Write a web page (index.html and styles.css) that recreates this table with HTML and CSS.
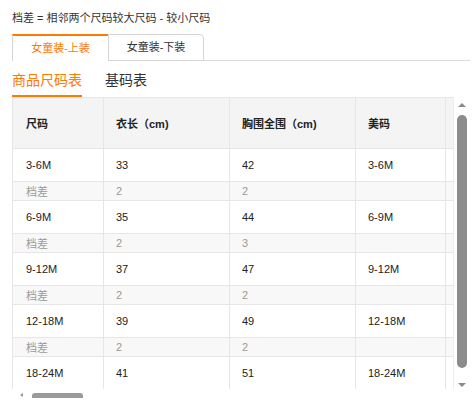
FILE: index.html
```html
<!DOCTYPE html>
<html lang="zh-CN">
<head>
<meta charset="utf-8">
<title>尺码表</title>
<link rel="stylesheet" href="styles.css">
</head>
<body>
  <div class="note">档差 = 相邻两个尺码较大尺码 - 较小尺码</div>
  <div class="tabs">
    <div class="tab active">女童装-上装</div>
    <div class="tab">女童装-下装</div>
  </div>
  <div class="subtabs">
    <div class="subtab active">商品尺码表</div>
    <div class="subtab">基码表</div>
  </div>
  <div class="table-wrap">
    <div class="viewport">
      <table class="size-table">
        <colgroup>
          <col class="c1"><col class="c2"><col class="c3"><col class="c4"><col class="c5"><col class="c6">
        </colgroup>
        <thead>
          <tr><th>尺码</th><th>衣长（cm)</th><th>胸围全围（cm)</th><th>美码</th><th></th><th></th></tr>
        </thead>
        <tbody>
          <tr class="data"><td>3-6M</td><td>33</td><td>42</td><td>3-6M</td><td></td><td></td></tr>
          <tr class="diff"><td>档差</td><td>2</td><td>2</td><td></td><td></td><td></td></tr>
          <tr class="data"><td>6-9M</td><td>35</td><td>44</td><td>6-9M</td><td></td><td></td></tr>
          <tr class="diff"><td>档差</td><td>2</td><td>3</td><td></td><td></td><td></td></tr>
          <tr class="data"><td>9-12M</td><td>37</td><td>47</td><td>9-12M</td><td></td><td></td></tr>
          <tr class="diff"><td>档差</td><td>2</td><td>2</td><td></td><td></td><td></td></tr>
          <tr class="data"><td>12-18M</td><td>39</td><td>49</td><td>12-18M</td><td></td><td></td></tr>
          <tr class="diff"><td>档差</td><td>2</td><td>2</td><td></td><td></td><td></td></tr>
          <tr class="data"><td>18-24M</td><td>41</td><td>51</td><td>18-24M</td><td></td><td></td></tr>
        </tbody>
      </table>
    </div>
    <div class="vscroll">
      <span class="arrow up"></span>
      <span class="vthumb"></span>
      <span class="arrow down"></span>
    </div>
    <div class="hscroll">
      <span class="harrow"></span>
      <span class="hthumb"></span>
    </div>
  </div>
</body>
</html>
```

FILE: styles.css
```css
html, body {
  margin: 0;
  background: #fff;
}
body {
  padding: 11px 4px 0 12px;
  font-family: "Liberation Sans", "Noto Sans CJK SC", sans-serif;
  font-size: 11px;
  color: #333;
}
.note {
  height: 14px;
  line-height: 14px;
  font-size: 11px;
  color: #333;
  margin-bottom: 9px;
}
.tabs {
  display: flex;
  border-bottom: 1px solid #dcdcdc;
  height: 26px;
}
.tab {
  box-sizing: border-box;
  width: 96px;
  height: 27px;
  border: 1px solid #d6d6d6;
  border-top-right-radius: 4px;
  text-align: center;
  line-height: 25px;
  color: #333;
  background: #fff;
}
.tab.active {
  border-top: 2px solid #ff7a00;
  border-right: none;
  border-bottom: none;
  border-radius: 0;
  color: #ff7a00;
  line-height: 24px;
}
.subtabs {
  display: flex;
  gap: 23px;
  height: 36px;
}
.subtab {
  box-sizing: border-box;
  height: 36px;
  padding-top: 4px;
  line-height: 30px;
  font-size: 14px;
  color: #333;
}
.subtab.active {
  color: #ff7a00;
  border-bottom: 2px solid #ff7a00;
}
.table-wrap {
  position: relative;
  width: 458px;
  height: 301px;
  overflow: hidden;
  background: #fff;
}
.viewport {
  width: 442px;
  height: 292px;
  overflow: hidden;
  background: #f4f4f4;
}
.size-table {
  border-collapse: collapse;
  table-layout: fixed;
  width: 660px;
  font-size: 11px;
}
.c1 { width: 91px; }
.c2 { width: 126px; }
.c3 { width: 126px; }
.c4 { width: 90px; }
.c5 { width: 110px; }
.c6 { width: 117px; }
.size-table th,
.size-table td {
  border: 1px solid #e6e6e6;
  padding: 0 0 0 12px;
  text-align: left;
  white-space: nowrap;
  overflow: hidden;
}
.size-table th {
  height: 50px;
  background: #f4f4f4;
  font-weight: bold;
  color: #222;
}
.size-table th:first-child,
.size-table td:first-child {
  padding-left: 13px;
}
.size-table tr.data td {
  height: 32px;
  background: #fff;
  color: #222;
}
.size-table tr.diff td {
  height: 18px;
  background: #f8f8f8;
  color: #9a9a9a;
}
.vscroll {
  position: absolute;
  top: 0;
  right: 0;
  width: 16px;
  bottom: 0;
  background: #fff;
  border-left: 1px solid #ededed;
}
.arrow {
  position: absolute;
  left: 4px;
  width: 0;
  height: 0;
  border-left: 4px solid transparent;
  border-right: 4px solid transparent;
}
.arrow.up {
  top: 6px;
  border-bottom: 4px solid #8a8a8a;
}
.arrow.down {
  top: 286px;
  border-top: 4px solid #8a8a8a;
}
.vthumb {
  position: absolute;
  top: 18px;
  left: 3px;
  width: 10px;
  height: 253px;
  border-radius: 5px;
  background: #8c8c8c;
}
.hscroll {
  position: absolute;
  left: 0;
  bottom: 0;
  width: 442px;
  height: 9px;
  background: #fff;
}
.harrow {
  position: absolute;
  left: 8px;
  top: 4px;
  width: 0;
  height: 0;
  border-top: 2px solid transparent;
  border-bottom: 2px solid transparent;
  border-right: 3px solid #999;
}
.hthumb {
  position: absolute;
  left: 20px;
  top: 4px;
  width: 51px;
  height: 5px;
  border-radius: 3px 3px 0 0;
  background: #9a9a9a;
}
```
